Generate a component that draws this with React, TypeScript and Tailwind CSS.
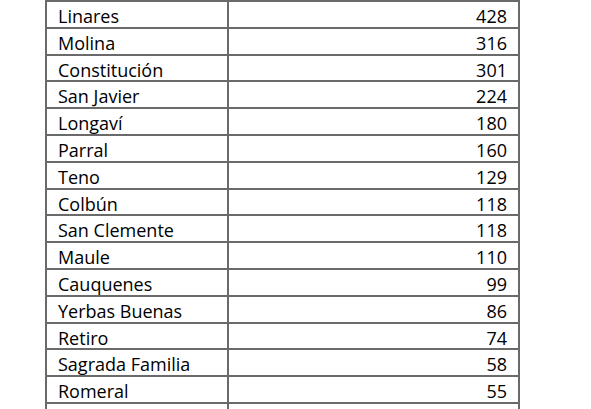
const rows: [string, number][] = [
  ['Linares', 428],
  ['Molina', 316],
  ['Constitución', 301],
  ['San Javier', 224],
  ['Longaví', 180],
  ['Parral', 160],
  ['Teno', 129],
  ['Colbún', 118],
  ['San Clemente', 118],
  ['Maule', 110],
  ['Cauquenes', 99],
  ['Yerbas Buenas', 86],
  ['Retiro', 74],
  ['Sagrada Familia', 58],
  ['Romeral', 55],
];

export default function App() {
  return (
    <div className="w-[591px] h-[409px] overflow-hidden bg-white font-['Open_Sans',sans-serif] text-[18px] text-black">
      <div className="ml-[45px] w-[475px] mt-[-25px]">
        <div className="flex h-[27px] border-x-2 border-b-2 border-[#6a6a6a]">
          <div className="w-[182px] border-r-2 border-[#6a6a6a]" />
          <div className="flex-1" />
        </div>
        {rows.map(([name, n]) => (
          <div key={name} className="flex h-[26.8px] border-x-2 border-b-2 border-[#6a6a6a] leading-none">
            <div className="w-[182px] border-r-2 border-[#6a6a6a] pl-[11px] pt-[5px]">{name}</div>
            <div className="flex-1 text-right pr-[11px] pt-[5px]">{n}</div>
          </div>
        ))}
        <div className="flex h-[27px] border-x-2 border-[#6a6a6a]">
          <div className="w-[182px] border-r-2 border-[#6a6a6a]" />
          <div className="flex-1" />
        </div>
      </div>
    </div>
  );
}
